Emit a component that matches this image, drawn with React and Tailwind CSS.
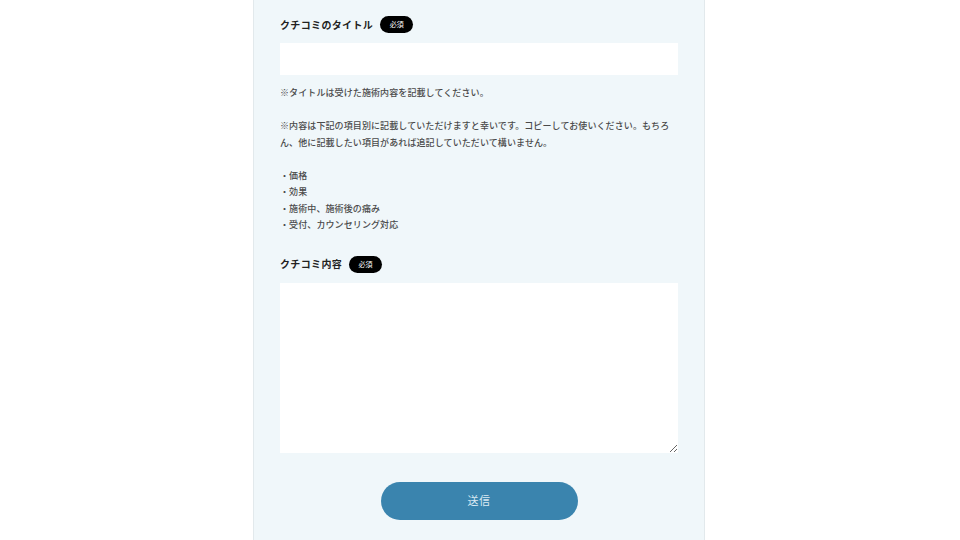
import React from "react";

function Label({ text }) {
  return (
    <div className="flex items-center h-[17px]">
      <span className="text-[10px] font-bold tracking-[0.35px] text-[#222] leading-none">{text}</span>
      <span className="ml-[7px] inline-flex items-center justify-center w-[33px] h-[17px] rounded-full bg-black text-white text-[7px] leading-none">必須</span>
    </div>
  );
}

export default function App() {
  const font = { fontFamily: '"Noto Sans CJK JP", "Noto Sans", sans-serif' };
  return (
    <div className="w-[960px] h-[540px] bg-white overflow-hidden" style={font}>
      <div className="ml-[253px] w-[452px] h-[540px] bg-[#f0f7fa] border-x border-[#e2e9ec] px-[26px] pt-[16px]">
        <Label text="クチコミのタイトル" />
        <input className="mt-[10px] block w-full h-[32px] bg-white outline-none border-0" />
        <div className="mt-[10px] text-[9px] tracking-[0.1px] leading-[16.5px] text-[#4a4a4a] font-medium">
          <p>※タイトルは受けた施術内容を記載してください。</p>
          <p>&nbsp;</p>
          <p>※内容は下記の項目別に記載していただけますと幸いです。コピーしてお使いください。もちろん、他に記載したい項目があれば追記していただいて構いません。</p>
          <p>&nbsp;</p>
          <p>・価格</p>
          <p>・効果</p>
          <p>・施術中、施術後の痛み</p>
          <p>・受付、カウンセリング対応</p>
        </div>
        <div className="mt-[22px]">
          <Label text="クチコミ内容" />
        </div>
        <textarea className="mt-[10px] block w-full h-[170px] bg-white outline-none border-0 resize-y" />
        <div className="mt-[29px] flex justify-center">
          <button className="w-[197px] h-[38px] rounded-full bg-[#3a84ae] text-[#dceaf3] text-[11px] tracking-[0.5px]">送信</button>
        </div>
      </div>
    </div>
  );
}
